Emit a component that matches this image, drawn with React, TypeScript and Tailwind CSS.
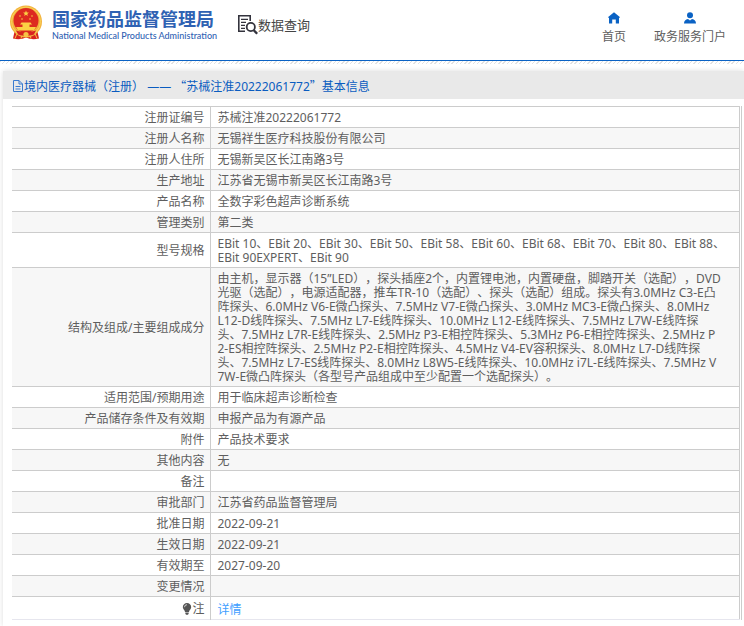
import type { ReactNode } from 'react'

interface Row {
  label: string
  value: string
}

const ROWS: Row[] = [
  { label: '注册证编号', value: '苏械注准20222061772' },
  { label: '注册人名称', value: '无锡祥生医疗科技股份有限公司' },
  { label: '注册人住所', value: '无锡新吴区长江南路3号' },
  { label: '生产地址', value: '江苏省无锡市新吴区长江南路3号' },
  { label: '产品名称', value: '全数字彩色超声诊断系统' },
  { label: '管理类别', value: '第二类' },
  {
    label: '型号规格',
    value:
      'EBit 10、EBit 20、EBit 30、EBit 50、EBit 58、EBit 60、EBit 68、EBit 70、EBit 80、EBit 88、\nEBit 90EXPERT、EBit 90',
  },
  {
    label: '结构及组成/主要组成成分',
    value: [
      '由主机，显示器（15”LED），探头插座2个，内置锂电池，内置硬盘，脚踏开关（选配），DVD',
      '光驱（选配），电源适配器，推车TR-10（选配）、探头（选配）组成。探头有3.0MHz C3-E凸',
      '阵探头、6.0MHz V6-E微凸探头、7.5MHz V7-E微凸探头、3.0MHz MC3-E微凸探头、8.0MHz',
      'L12-D线阵探头、7.5MHz L7-E线阵探头、10.0MHz L12-E线阵探头、7.5MHz L7W-E线阵探',
      '头、7.5MHz L7R-E线阵探头、2.5MHz P3-E相控阵探头、5.3MHz P6-E相控阵探头、2.5MHz P',
      '2-ES相控阵探头、2.5MHz P2-E相控阵探头、4.5MHz V4-EV容积探头、8.0MHz L7-D线阵探',
      '头、7.5MHz L7-ES线阵探头、8.0MHz L8W5-E线阵探头、10.0MHz i7L-E线阵探头、7.5MHz V',
      '7W-E微凸阵探头（各型号产品组成中至少配置一个选配探头）。',
    ].join('\n'),
  },
  { label: '适用范围/预期用途', value: '用于临床超声诊断检查' },
  { label: '产品储存条件及有效期', value: '申报产品为有源产品' },
  { label: '附件', value: '产品技术要求' },
  { label: '其他内容', value: '无' },
  { label: '备注', value: '' },
  { label: '审批部门', value: '江苏省药品监督管理局' },
  { label: '批准日期', value: '2022-09-21' },
  { label: '生效日期', value: '2022-09-21' },
  { label: '有效期至', value: '2027-09-20' },
  { label: '变更情况', value: '' },
]

function Emblem() {
  return (
    <svg viewBox="0 0 32 35" className="w-8 h-9 shrink-0" aria-hidden="true">
      <path d="M5 24 L3 33 Q10 35 16 32 Q22 35 29 33 L27 24Z" fill="#d8231f" />
      <circle cx="16" cy="16" r="16" fill="#f3b33d" />
      <circle cx="16" cy="16" r="14.5" fill="none" stroke="#f9d35b" strokeWidth="1" />
      <circle cx="16" cy="15" r="12.5" fill="#dd2a20" />
      <path d="M16 5l.8 1.900 2.100.2-1.600 1.300.5 2-1.800-1.100-1.800 1.100.5-2-1.600-1.300 2.100-.2z" fill="#fbd044" />
      <g fill="#fbd044">
        <circle cx="10" cy="10.500" r=".8" />
        <circle cx="22" cy="10.500" r=".8" />
        <circle cx="12" cy="13.500" r=".8" />
        <circle cx="20" cy="13.500" r=".8" />
        <path d="M11.500 17h9l1.500 2H10zM12.500 19h7v2.500h-7zM6 21.500h20L24 25H8z" />
      </g>
      <path d="M6 25q10 3 20 0l-2 4q-8 3-16 0z" fill="#d8231f" />
      <circle cx="16" cy="29" r="2.600" fill="#f7c344" />
      <path d="M7 28l-2 5M25 28l2 5M12 30l-1 3M20 30l1 3" stroke="#f7c344" strokeWidth="1" />
    </svg>
  )
}

function SearchDocIcon() {
  return (
    <svg viewBox="0 0 20 20" className="w-5 h-5 shrink-0" fill="none" stroke="#33333d" aria-hidden="true">
      <path d="M7 16.300H.8V.8h11.400V6" strokeWidth="1.600" />
      <path d="M3 4.300h7M3 7.300h5M3 10.300h4M3 13.300h4" strokeWidth="1.200" />
      <circle cx="12.800" cy="12" r="4.100" strokeWidth="1.800" />
      <path d="M15.800 15.200l3.400 3.600" strokeWidth="2.400" />
    </svg>
  )
}

function HomeIcon() {
  return (
    <svg viewBox="0 0 12 12" className="w-3 h-3" fill="#0a62c4" aria-hidden="true">
      <path d="M6 .3L11.800 5v.8H11V11.500H7.800V7.500H4.200v4H1V5.800H.2V5z" />
    </svg>
  )
}

function UserIcon() {
  return (
    <svg viewBox="0 0 12 12" className="w-3 h-3" fill="#0a62c4" aria-hidden="true">
      <circle cx="6" cy="3.200" r="3" />
      <path d="M0 11.600C0 8.900 1.500 7.300 4 7l2 1.500L8 7c2.500.3 4 1.900 4 4.600z" />
    </svg>
  )
}

function FileIcon() {
  return (
    <svg viewBox="0 0 12 12" className="w-3 h-3 shrink-0" fill="none" stroke="#3a7bd0" aria-hidden="true">
      <path d="M1.500.5H7L10.500 4v7.500h-9zM7 .5V4h3.500M3.500 6.500h5M3.500 9h5" />
    </svg>
  )
}

function BulbIcon() {
  return (
    <svg viewBox="0 0 10 12" className="w-2.5 h-3" fill="#555" aria-hidden="true">
      <path d="M5 0a4.200 4.200 0 0 1 4.200 4.200C9.200 6.200 7 7 7 9H3C3 7 .8 6.200.8 4.200A4.200 4.200 0 0 1 5 0zM3.300 9.600h3.400v1L6 11.800H4l-.7-1.200z" />
      <path d="M2.500 4.200A2.500 2.500 0 0 1 5 1.700" fill="none" stroke="#fff" strokeWidth=".7" />
    </svg>
  )
}

function NavLink({ icon, children }: { icon: ReactNode; children: ReactNode }) {
  return (
    <a href="#" className="flex flex-col items-center gap-[5px] text-xs">
      {icon}
      {children}
    </a>
  )
}

export default function App() {
  return (
    <div className="bg-white text-[#5e5e5e] text-xs font-['Noto_Sans','Noto_Sans_CJK_SC',sans-serif] [text-spacing-trim:space-all]">
      <header className="flex items-start h-[61px] pl-[10px] pr-[18px] border-b border-[#0a62c4]">
        <a href="#" className="flex items-start gap-[10px] pt-[5px] text-[#2f62b3]">
          <Emblem />
          <span className="flex flex-col w-[162px] pt-1">
            <span className="text-[18px] leading-[20px] font-bold whitespace-nowrap">国家药品监督管理局</span>
            <span className="text-[9px] leading-[14px] font-medium whitespace-nowrap font-['Lato',sans-serif]">
              National Medical Products Administration
            </span>
          </span>
        </a>
        <a href="#" className="flex items-center ml-6 pt-[15px] text-[13px] leading-[20px] text-[#444]">
          <SearchDocIcon />
          数据查询
        </a>
        <nav className="flex gap-7 ml-auto pt-3">
          <NavLink icon={<HomeIcon />}>首页</NavLink>
          <NavLink icon={<UserIcon />}>政务服务门户</NavLink>
        </nav>
      </header>
      <div className="h-[3px] bg-[repeating-linear-gradient(135deg,#e2e2e2_0_1px,#fff_1px_3px)]" />

      <main className="mt-[7px] ml-[3px] shadow-[0_0_5px_#ddd]">
        <h1 className="flex items-center h-7 pt-[2px] pl-[9px] bg-[#e9e9e9] text-[#0a5cc0]">
          <FileIcon />
          <span className="font-['Noto_Sans_CJK_SC',sans-serif]">
            境内医疗器械（注册）
            <span className="font-['Noto_Sans',sans-serif]"> —— </span>
            “苏械注准
            <span className="font-['Noto_Sans',sans-serif]">20222061772</span>
            ”基本信息
          </span>
        </h1>
        <div className="pt-[7px] pl-[9px] pr-[2px] pb-[6px] bg-white">
          <div className="border-r border-[#ccc] pr-px">
            <table className="w-full table-fixed border-collapse border-t border-r border-[#ccc] leading-[14px]">
              <colgroup>
                <col className="w-[198px]" />
                <col />
              </colgroup>
              <tbody>
                {ROWS.map((row) => (
                  <tr key={row.label} className="h-[21px] border-b border-[#ccc] even:bg-[#f7f7f7]">
                    <th scope="row" className="pt-1 pb-[2px] pr-[5px] border-r border-[#ccc] text-right font-normal">
                      {row.label}
                    </th>
                    <td className="pt-1 pb-[2px] pl-[7px] whitespace-pre">{row.value}</td>
                  </tr>
                ))}
                <tr className="border-b border-[#e6e6ee]">
                  <th scope="row" className="pt-[5px] pb-[3px] pr-[5px] border-r border-[#ccc] font-normal">
                    <span className="flex items-center justify-end">
                      <BulbIcon />注
                    </span>
                  </th>
                  <td className="pt-[6px] pb-[2px] pl-[7px]">
                    <a href="#" className="text-[#409eff]">详情</a>
                  </td>
                </tr>
              </tbody>
            </table>
          </div>
        </div>
      </main>
    </div>
  )
}
